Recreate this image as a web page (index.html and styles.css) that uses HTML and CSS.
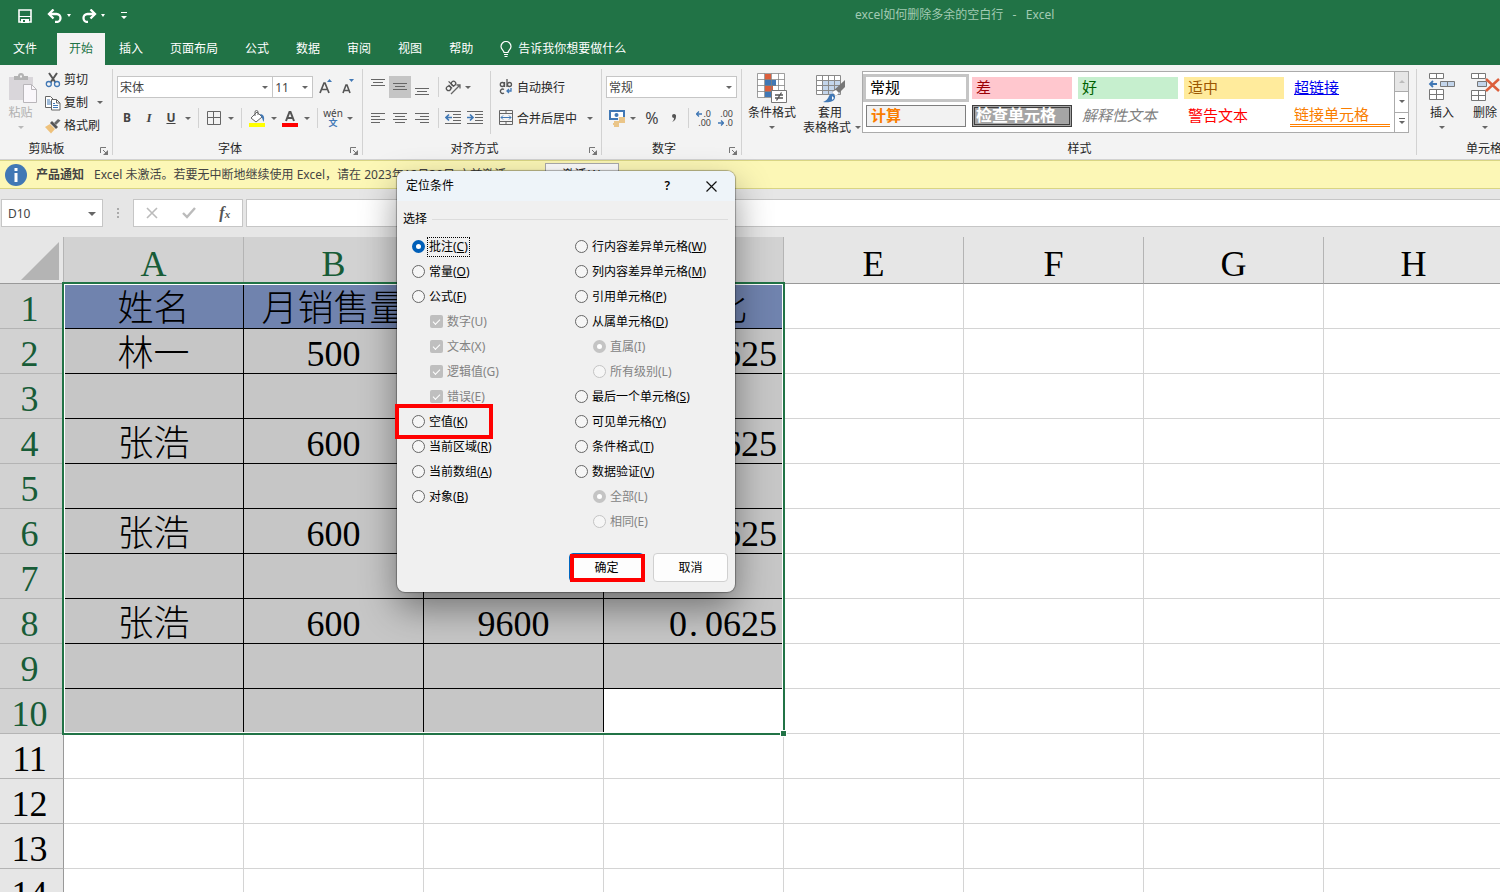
FILE: index.html
```html
<!DOCTYPE html>
<html lang="zh-CN">
<head>
<meta charset="utf-8">
<title>excel如何删除多余的空白行 - Excel</title>
<link rel="stylesheet" href="styles.css">
</head>
<body>
<div class="app">
  <header class="titlebar">
    <div class="quick">
      <button class="qbtn" aria-label="保存"><svg width="14" height="14" viewBox="0 0 14 14"><path d="M1 1h12v12H1z" fill="none" stroke="#fff" stroke-width="1.6"/><path d="M1 7h12v1H1zM3 10h8v4H3z" fill="#fff"/><path d="M5 11h2v2H5z" fill="#217346"/></svg></button>
      <button class="qbtn undo" aria-label="撤消"><svg width="16" height="14" viewBox="0 0 16 14"><path d="M2 5h7.500a4 4 0 0 1 0 8H8" fill="none" stroke="#fff" stroke-width="2.300"/><path d="M6.500.5L2 5l4.500 4.500" fill="none" stroke="#fff" stroke-width="2.300"/></svg></button>
      <span class="caret light"></span>
      <button class="qbtn redo" aria-label="恢复"><svg width="16" height="14" viewBox="0 0 16 14"><path d="M14 5H6.500a4 4 0 0 0 0 8H7" fill="none" stroke="#fff" stroke-width="2.300"/><path d="M9.500.5L14 5 9.500 9.500" fill="none" stroke="#fff" stroke-width="2.300"/></svg></button>
      <span class="caret light"></span>
      <button class="qbtn more" aria-label="自定义快速访问工具栏"><svg width="6" height="8" viewBox="0 0 6 8"><path d="M0 0h6v1H0zM0 4h6L3 7z" fill="#fff"/></svg></button>
    </div>
    <div class="doc-title">excel如何删除多余的空白行&nbsp; &nbsp;-&nbsp; &nbsp;Excel</div>
  </header>
  <nav class="tabs">
    <button class="tab file">文件</button>
    <button class="tab active">开始</button>
    <button class="tab">插入</button>
    <button class="tab">页面布局</button>
    <button class="tab">公式</button>
    <button class="tab">数据</button>
    <button class="tab">审阅</button>
    <button class="tab">视图</button>
    <button class="tab">帮助</button>
    <button class="tab tell"><svg width="12" height="17" viewBox="0 0 12 17"><path d="M4 11.500C4 9.500 1 8.500 1 5.500a5 5 0 0 1 10 0c0 3-3 4-3 6zM4 13.500h4M4.500 15.500h3" fill="none" stroke="#fff" stroke-width="1.200"/></svg>告诉我你想要做什么</button>
  </nav>

  <section class="ribbon">
    <div class="group clipboard">
      <div class="group-main">
        <button class="big disabled paste"><svg width="28" height="31" viewBox="0 0 28 31"><path d="M0 4h24v23H0z" fill="#d9d6da"/><path d="M5 7V3h4a3 3 0 0 1 6 0h4v4z" fill="#b3b3b3"/><path d="M11 2.500h2v2h-2z" fill="#f3f3f3"/><path d="M14.500 11.500h8l5 5v13h-13z" fill="#faf7fb" stroke="#b9b6ba"/><path d="M22.500 11.500v5h5" fill="none" stroke="#b9b6ba"/></svg><span>粘贴</span><i class="caret"></i></button>
        <div class="stack">
          <button class="small"><svg width="16" height="16" viewBox="0 0 16 16"><path d="M4 1l6.500 9.500M12 1L5.500 10.500" stroke="#555" stroke-width="2" fill="none"/><circle cx="3.800" cy="12" r="2.500" fill="none" stroke="#4178b5" stroke-width="1.300"/><circle cx="12" cy="12" r="2.500" fill="none" stroke="#4178b5" stroke-width="1.300"/></svg>剪切</button>
          <button class="small"><svg width="16" height="16" viewBox="0 0 16 16"><path d="M.5 1.500h5l3 3v8h-8z" fill="#fff" stroke="#666"/><path d="M2 5h3M2 7h4M2 9h4" stroke="#4178b5"/><path d="M6.500 4.500h5l3.500 3.500v7h-8.500z" fill="#fff" stroke="#666"/><path d="M11.500 4.500V8H15" fill="none" stroke="#666"/><path d="M8 8.500h2M8 10.500h5M8 12.500h5" stroke="#4178b5"/></svg>复制<i class="caret"></i></button>
          <button class="small"><svg width="16" height="16" viewBox="0 0 16 16"><path d="M0 9l5-3 5 5-4 4.500z" fill="#eec17b"/><path d="M5 5l2-2 6 6-2 2z" fill="#555"/><path d="M9 5l4-4 2.500 1.500L11 7z" fill="#6a6a6a"/></svg>格式刷</button>
        </div>
      </div>
      <div class="group-label">剪贴板</div>
      <button class="launch" aria-label="剪贴板设置"><svg width="8" height="8" viewBox="0 0 8 8"><path d="M.5 6V.5H6M3 3l4 4" fill="none" stroke="#777"/><path d="M8 3v5H3z" fill="#777"/></svg></button>
    </div>

    <div class="group font">
      <div class="line">
        <span class="combo name"><select aria-label="字体"><option>宋体</option></select><i class="caret"></i></span>
        <span class="combo size"><select aria-label="字号"><option>11</option></select><i class="caret"></i></span>
        <button class="tool grow" aria-label="增大字号"><svg width="14" height="16" viewBox="0 0 14 16"><path d="M1 14L5 4h1l4 10M2.500 10.500h6" fill="none" stroke="#555" stroke-width="1.700"/><path d="M8 3h5L10.500 0z" fill="#4178b5"/></svg></button>
        <button class="tool" aria-label="减小字号"><svg width="14" height="16" viewBox="0 0 14 16"><path d="M2 14l3-8h1l3 8M3 11.500h5" fill="none" stroke="#555" stroke-width="1.600"/><path d="M8 0h5l-2.500 3z" fill="#4178b5"/></svg></button>
      </div>
      <div class="line second">
        <button class="tool b">B</button><button class="tool i">I</button><button class="tool u">U</button><i class="caret"></i><i class="sep"></i>
        <button class="tool" aria-label="边框"><svg width="14" height="14" viewBox="0 0 14 14"><path d="M.5.5h13v13H.5zM6.500.5v13M.5 6.500h13" fill="none" stroke="#666"/></svg></button><i class="caret"></i><i class="sep"></i>
        <button class="tool" aria-label="填充颜色"><svg width="16" height="17" viewBox="0 0 16 17"><path d="M2 8l6-6 5 5-6 5z" fill="#fff" stroke="#666"/><path d="M6 6V2a1.500 1.500 0 0 1 3 0v3" fill="none" stroke="#666"/><path d="M11 4c4 0 5 4 3.500 8-1-2-1-4-2-5z" fill="#4178b5"/><path d="M0 13h16v4H0z" fill="#ff0"/></svg></button><i class="caret"></i>
        <button class="tool" aria-label="字体颜色"><svg width="16" height="17" viewBox="0 0 16 17"><path d="M4 11L7.500 2h1L12 11M5.500 8h5" fill="none" stroke="#555" stroke-width="2"/><path d="M0 13h16v4H0z" fill="#f00"/></svg></button><i class="caret"></i><i class="sep"></i>
        <button class="tool pinyin"><span>wén</span><b>文</b></button><i class="caret"></i>
      </div>
      <div class="group-label">字体</div>
      <button class="launch" aria-label="字体设置"><svg width="8" height="8" viewBox="0 0 8 8"><path d="M.5 6V.5H6M3 3l4 4" fill="none" stroke="#777"/><path d="M8 3v5H3z" fill="#777"/></svg></button>
    </div>

    <div class="group align">
      <div class="line">
        <button class="tool" aria-label="顶端对齐"><svg width="14" height="20" viewBox="0 0 14 20"><path d="M0 2.500h14M2 5.500h10M0 8.500h14" stroke="#666"/></svg></button>
        <button class="tool on" aria-label="垂直居中"><svg width="14" height="20" viewBox="0 0 14 20"><path d="M0 6.500h14M2 9.500h10M0 12.500h14" stroke="#666"/></svg></button>
        <button class="tool" aria-label="底端对齐"><svg width="14" height="20" viewBox="0 0 14 20"><path d="M0 11.500h14M2 14.500h10M0 17.500h14" stroke="#666"/></svg></button>
        <i class="sep"></i>
        <button class="tool orient" aria-label="方向"><svg width="17" height="16" viewBox="0 0 17 16"><g transform="rotate(-45 5 8)" fill="none" stroke="#555" stroke-width="1.300"><circle cx="3" cy="8" r="2.200"/><path d="M5.500 5.500v5M8 3v7.500"/><circle cx="10" cy="8" r="2.200"/></g><path d="M6 15l9-9M11.500 6H15v3.500" fill="none" stroke="#666" stroke-width="1.300"/></svg></button><i class="caret"></i>
        <i class="sep tall pushed"></i>
        <button class="word"><svg width="16" height="16" viewBox="0 0 16 16"><g fill="none" stroke="#555" stroke-width="1.300"><path d="M6.500 3v5"/><circle cx="4.300" cy="5.500" r="2"/><path d="M9 0v8"/><circle cx="11.500" cy="5.500" r="2"/><path d="M6 10.500a2.200 2.200 0 1 0 0 3.500"/></g><path d="M13 9v3H9M11 10l-2 2 2 2" fill="none" stroke="#4178b5" stroke-width="1.300"/></svg><span>自动换行</span></button>
      </div>
      <div class="line second">
        <button class="tool" aria-label="左对齐"><svg width="14" height="12" viewBox="0 0 14 12"><path d="M0 1.500h14M0 4.500h9M0 7.500h14M0 10.500h9" stroke="#666"/></svg></button>
        <button class="tool" aria-label="居中"><svg width="14" height="12" viewBox="0 0 14 12"><path d="M0 1.500h14M2 4.500h10M0 7.500h14M2 10.500h10" stroke="#666"/></svg></button>
        <button class="tool" aria-label="右对齐"><svg width="14" height="12" viewBox="0 0 14 12"><path d="M0 1.500h14M5 4.500h9M0 7.500h14M5 10.500h9" stroke="#666"/></svg></button>
        <i class="sep"></i>
        <button class="tool" aria-label="减少缩进"><svg width="16" height="14" viewBox="0 0 16 14"><path d="M0 .5h16M8 3.500h8M8 6.500h8M8 9.500h8M0 12.500h16" stroke="#666"/><path d="M7 6.500H1.500M4 3.500l-3 3 3 3" fill="none" stroke="#4178b5" stroke-width="1.700"/></svg></button>
        <button class="tool" aria-label="增加缩进"><svg width="16" height="14" viewBox="0 0 16 14"><path d="M0 .5h16M8 3.500h8M8 6.500h8M8 9.500h8M0 12.500h16" stroke="#666"/><path d="M0 6.500h5.500M3 3.500l3 3-3 3" fill="none" stroke="#4178b5" stroke-width="1.700"/></svg></button>
        <i class="sep tall"></i>
        <button class="word"><svg width="16" height="16" viewBox="0 0 16 16"><path d="M1.500.5h13v14h-13zM1.500 3.500h13M1.500 11.500h13M8 .5v3M8 11.500v3" fill="none" stroke="#666"/><path d="M3 7.500h10M5 5.500l-2 2 2 2M11 5.500l2 2-2 2" fill="none" stroke="#4178b5"/></svg><span>合并后居中</span><i class="caret"></i></button>
      </div>
      <div class="group-label">对齐方式</div>
      <button class="launch" aria-label="对齐设置"><svg width="8" height="8" viewBox="0 0 8 8"><path d="M.5 6V.5H6M3 3l4 4" fill="none" stroke="#777"/><path d="M8 3v5H3z" fill="#777"/></svg></button>
    </div>

    <div class="group number">
      <div class="line"><span class="combo format"><select aria-label="数字格式"><option>常规</option></select><i class="caret"></i></span></div>
      <div class="line second">
        <button class="tool" aria-label="会计数字格式"><svg width="17" height="17" viewBox="0 0 17 17"><path d="M1 1h14v8H1z" fill="#fff" stroke="#4178b5" stroke-width="2"/><circle cx="7.500" cy="5" r="2" fill="#4178b5"/><path d="M9 7h7v6H9zM4 11h6v6H4z" fill="#f3f3f3"/><path d="M10 8h6M10 10h6M10 12h6M5 12h5M4 14h6M5 16h5" stroke="#e8b765" stroke-width="1.500"/></svg></button><i class="caret"></i>
        <button class="tool percent">%</button>
        <button class="tool" aria-label="千位分隔样式"><svg width="6" height="8" viewBox="0 0 6 8"><path d="M3 0a2 2 0 0 1 2 2.500C5 5 4 7 1 8c1-1 2-2 2-4A2 2 0 0 1 3 0z" fill="#555"/></svg></button>
        <i class="sep"></i>
        <button class="tool decimals"><span><svg width="6" height="6" viewBox="0 0 6 6"><path d="M6 3H1M3 .5L.5 3 3 5.500" fill="none" stroke="#4178b5" stroke-width="1.300"/></svg>.0</span><span>.00</span></button>
        <button class="tool decimals"><span>.00</span><span><svg width="6" height="6" viewBox="0 0 6 6"><path d="M0 3h5M3 .5L5.500 3 3 5.500" fill="none" stroke="#4178b5" stroke-width="1.300"/></svg>.0</span></button>
      </div>
      <div class="group-label">数字</div>
      <button class="launch" aria-label="数字设置"><svg width="8" height="8" viewBox="0 0 8 8"><path d="M.5 6V.5H6M3 3l4 4" fill="none" stroke="#777"/><path d="M8 3v5H3z" fill="#777"/></svg></button>
    </div>

    <div class="group styles">
      <div class="group-main">
        <button class="big cond"><svg width="31" height="31" viewBox="0 0 31 31"><path d="M1 .5h26v24H1z" fill="#fff"/><path d="M8 1h6v6H8zM8 13h8v6H8z" fill="#dc5f3c"/><path d="M8 7h11v6H8zM8 19h6v5H8z" fill="#4178b5"/><path d="M.5.5h27v24H.5zM7.500.5v24M14.500.5v24M21.500.5v24M.5 6.500h27M.5 12.500h27M.5 18.500h27" fill="none" stroke="#808080" stroke-opacity=".75"/><path d="M14.500 17.500h15v12h-15z" fill="#fff" stroke="#777"/><path d="M18 22h8M18 25h8M24.500 19.500l-5 8" stroke="#555" stroke-width="1.300"/></svg><span>条件格式</span><i class="caret"></i></button>
        <button class="big tablefmt"><svg width="31" height="31" viewBox="0 0 31 31"><path d="M1.500 2.500h24v19h-24z" fill="#fff"/><path d="M8 8h17v14H8z" fill="#c3d5eb"/><path d="M1.500 2.500h24v19h-24zM7.500 2.500v19M13.500 2.500v19M19.500 2.500v19M1.500 7.500h24M1.500 12.500h24M1.500 17.500h24" fill="none" stroke="#8a8a8a"/><path d="M30 7v7l-9 9-4-4z" fill="#777"/><path d="M21 17l3 3-3 3-4-4z" fill="#fff"/><path d="M14 23c2-4 7-2 6 2-1 4-7 5-12 4 3-1 5-3 6-6z" fill="#4178b5"/><path d="M17 23l2 2-2 2z" fill="#fff"/></svg><span>套用</span><span class="withcaret">表格格式<i class="caret"></i></span></button>
        <div class="gallery">
          <div class="samples">
            <button class="st normal">常规</button><button class="st bad">差</button><button class="st good">好</button><button class="st neutral">适中</button><button class="st link">超链接</button>
            <button class="st calc">计算</button><button class="st check">检查单元格</button><button class="st explain">解释性文本</button><button class="st warn">警告文本</button><button class="st linked">链接单元格</button>
          </div>
          <div class="scroll"><button class="off" aria-label="上一行"><i class="caret up"></i></button><button aria-label="下一行"><i class="caret"></i></button><button aria-label="更多"><i class="caret bar"></i></button></div>
        </div>
      </div>
      <div class="group-label">样式</div>
    </div>

    <div class="group cells">
      <div class="group-main">
        <button class="big"><svg width="28" height="31" viewBox="0 0 28 31"><g fill="#fff" stroke="#777"><path d="M1.500.5h14v5h-14zM8.500.5v5M1.500 16.500h14v10h-14zM1.500 21.500h14M8.500 16.500v10"/><path d="M12.500 8.500h14v5h-14zM19.500 8.500v5" fill="#c3d5eb"/></g><path d="M9 11H3M5 8l-3 3 3 3" fill="none" stroke="#4178b5" stroke-width="1.800"/></svg><span>插入</span><i class="caret"></i></button>
        <button class="big"><svg width="30" height="31" viewBox="0 0 30 31"><g fill="#fff" stroke="#777"><path d="M1.500.5h14v5h-14zM8.500.5v5M1.500 17.500h14v10h-14zM1.500 22.500h14M8.500 17.500v10"/><path d="M7.500 8.500h9v5h-9z" fill="#c3d5eb"/></g><path d="M16 6l13 12M29 6L16 18" stroke="#dc5f3c" stroke-width="2.500"/></svg><span>删除</span><i class="caret"></i></button>
      </div>
      <div class="group-label">单元格</div>
    </div>
  </section>

  <section class="notice">
    <svg width="22" height="22" viewBox="0 0 22 22"><circle cx="11" cy="11" r="11" fill="#4178b5"/><path d="M9.500 4h3v3h-3zM9.500 9h3v9h-3z" fill="#fff"/></svg>
    <strong>产品通知</strong>
    <span>Excel 未激活。若要无中断地继续使用 Excel，请在 2023年12月30日 之前激活。</span>
    <button>激活(A)</button>
  </section>

  <section class="formula">
    <label class="namebox"><input value="D10" aria-label="名称框"><i class="caret"></i></label>
    <i class="dots"></i>
    <div class="fx">
      <button aria-label="取消"><svg width="12" height="12" viewBox="0 0 12 12"><path d="M1 1l10 10M11 1L1 11" stroke="#bbb" stroke-width="1.600"/></svg></button>
      <button aria-label="输入"><svg width="14" height="12" viewBox="0 0 14 12"><path d="M1 6l4 4 8-9" fill="none" stroke="#bbb" stroke-width="2.400"/></svg></button>
      <button class="fn"><span>f</span><small>x</small></button>
    </div>
    <input class="edit" aria-label="编辑栏">
  </section>

  <main class="sheet">
    <table class="grid">
      <colgroup><col class="rowcol"><col><col><col><col><col><col><col><col></colgroup>
      <thead><tr><th class="corner"><svg width="40" height="38" viewBox="0 0 40 38"><path d="M39 0v38H1z" fill="#b4b4b4"/></svg></th><th class="sel">A</th><th class="sel">B</th><th class="sel">C</th><th class="sel">D</th><th>E</th><th>F</th><th>G</th><th>H</th></tr></thead>
      <tbody class="picked">
        <tr class="head"><th>1</th><td>姓名</td><td>月销售量</td><td></td><td>销售比</td><td></td><td></td><td></td><td></td></tr>
        <tr><th>2</th><td>林一</td><td>500</td><td></td><td class="num">0<span class="pt">.</span>0625</td><td></td><td></td><td></td><td></td></tr>
        <tr><th>3</th><td></td><td></td><td></td><td></td><td></td><td></td><td></td><td></td></tr>
        <tr><th>4</th><td>张浩</td><td>600</td><td></td><td class="num">0<span class="pt">.</span>0625</td><td></td><td></td><td></td><td></td></tr>
        <tr><th>5</th><td></td><td></td><td></td><td></td><td></td><td></td><td></td><td></td></tr>
        <tr><th>6</th><td>张浩</td><td>600</td><td></td><td class="num">0<span class="pt">.</span>0625</td><td></td><td></td><td></td><td></td></tr>
        <tr><th>7</th><td></td><td></td><td></td><td></td><td></td><td></td><td></td><td></td></tr>
        <tr><th>8</th><td>张浩</td><td>600</td><td>9600</td><td class="num">0<span class="pt">.</span>0625</td><td></td><td></td><td></td><td></td></tr>
        <tr><th>9</th><td></td><td></td><td></td><td></td><td></td><td></td><td></td><td></td></tr>
        <tr><th>10</th><td></td><td></td><td></td><td class="current"></td><td></td><td></td><td></td><td></td></tr>
      </tbody>
      <tbody>
        <tr><th>11</th><td></td><td></td><td></td><td></td><td></td><td></td><td></td><td></td></tr>
        <tr><th>12</th><td></td><td></td><td></td><td></td><td></td><td></td><td></td><td></td></tr>
        <tr><th>13</th><td></td><td></td><td></td><td></td><td></td><td></td><td></td><td></td></tr>
        <tr><th>14</th><td></td><td></td><td></td><td></td><td></td><td></td><td></td><td></td></tr>
      </tbody>
    </table>
    <div class="selection"><i class="handle"></i></div>
  </main>

  <div class="dialog" role="dialog" aria-labelledby="dlg">
    <div class="dlg-title"><span id="dlg">定位条件</span><button class="help">?</button><button class="close" aria-label="关闭"><svg width="11" height="11" viewBox="0 0 11 11"><path d="M.5.5l10 10M10.500.5l-10 10" stroke="#111" stroke-width="1.200"/></svg></button></div>
    <form class="dlg-body">
      <div class="legend">选择</div>
      <div class="options">
        <div class="col">
          <label><input type="radio" name="go" checked><span class="focus">批注(<u>C</u>)</span></label>
          <label><input type="radio" name="go"><span>常量(<u>O</u>)</span></label>
          <label><input type="radio" name="go"><span>公式(<u>F</u>)</span></label>
          <label class="sub"><input type="checkbox" checked disabled><span>数字(U)</span></label>
          <label class="sub"><input type="checkbox" checked disabled><span>文本(X)</span></label>
          <label class="sub"><input type="checkbox" checked disabled><span>逻辑值(G)</span></label>
          <label class="sub"><input type="checkbox" checked disabled><span>错误(E)</span></label>
          <label class="marked"><input type="radio" name="go"><span>空值(<u>K</u>)</span></label>
          <label><input type="radio" name="go"><span>当前区域(<u>R</u>)</span></label>
          <label><input type="radio" name="go"><span>当前数组(<u>A</u>)</span></label>
          <label><input type="radio" name="go"><span>对象(<u>B</u>)</span></label>
        </div>
        <div class="col">
          <label><input type="radio" name="go"><span>行内容差异单元格(<u>W</u>)</span></label>
          <label><input type="radio" name="go"><span>列内容差异单元格(<u>M</u>)</span></label>
          <label><input type="radio" name="go"><span>引用单元格(<u>P</u>)</span></label>
          <label><input type="radio" name="go"><span>从属单元格(<u>D</u>)</span></label>
          <label class="sub"><input type="radio" name="level" checked disabled><span>直属(I)</span></label>
          <label class="sub"><input type="radio" name="level" disabled><span>所有级别(L)</span></label>
          <label><input type="radio" name="go"><span>最后一个单元格(<u>S</u>)</span></label>
          <label><input type="radio" name="go"><span>可见单元格(<u>Y</u>)</span></label>
          <label><input type="radio" name="go"><span>条件格式(<u>T</u>)</span></label>
          <label><input type="radio" name="go"><span>数据验证(<u>V</u>)</span></label>
          <label class="sub"><input type="radio" name="valid" checked disabled><span>全部(L)</span></label>
          <label class="sub"><input type="radio" name="valid" disabled><span>相同(E)</span></label>
        </div>
      </div>
      <div class="actions"><button type="button" class="ok">确定</button><button type="button">取消</button></div>
    </form>
  </div>
</div>
</body>
</html>
```

FILE: styles.css
```css
*, *::before, *::after { box-sizing: border-box; }
body { margin: 0; }
body, button, input, select { font-family: "Noto Sans", "Noto Sans CJK SC", sans-serif; font-size: 12px; line-height: 16px; color: #262626; }
button { border: 0; padding: 0; background: none; white-space: nowrap; }
input, select { border: 0; margin: 0; padding: 0; background: none; outline: 0; }
svg { display: block; flex: none; }
.app { position: relative; display: flex; flex-direction: column; height: 100vh; overflow: hidden; background: #fff; }

.caret { flex: none; width: 0; height: 0; border: 3px solid transparent; border-top-color: #666; border-bottom: 0; }
.caret.light { border-width: 2px; border-top-width: 3px; border-top-color: #fff; border-bottom: 0; margin: 0 10px 0 4px; }

/* title bar and tabs */
.titlebar { display: flex; align-items: center; height: 33px; flex: none; background: #217346; }
.quick { display: flex; align-items: center; width: 855px; padding: 0 0 2px 18px; }
.undo { margin-left: 15px; }
.more { margin-left: 6px; }
.doc-title { color: #a3cbb4; white-space: nowrap; padding-bottom: 4px; }
.tabs { display: flex; gap: 1px; height: 32px; flex: none; background: #217346; }
.tab { padding: 0 13px 1px; color: #fff; }
.tab.file { margin-right: 6px; }
.tab.active { padding: 0 12px 1px; background: #f3f3f3; color: #217346; }
.tab.tell { display: flex; align-items: center; gap: 6px; padding-bottom: 0; }

/* ribbon */
.ribbon { display: flex; height: 95px; flex: none; background: #f3f3f3; border-bottom: 1px solid #d2d2d2; }
.group { position: relative; display: flex; flex-direction: column; flex: none; padding: 6px 4px 2px; }
.group::after { content: ""; position: absolute; right: 0; top: 4px; bottom: 4px; width: 1px; background: #d2d2d2; }
.group-main { display: flex; }
.group-label { margin-top: auto; padding-right: 16px; text-align: center; }
.launch { position: absolute; right: 5px; bottom: 4px; }
.clipboard { width: 113px; }
.font { width: 250px; }
.align { width: 239px; }
.number { width: 140px; }
.styles { width: 675px; }
.cells { width: 134px; }
.cells .group-label, .styles .group-label { padding-right: 0; }
.clipboard .group-label { padding-right: 20px; }

.big { display: flex; flex-direction: column; align-items: center; padding-top: 2px; }
.big .caret { margin-top: 6px; }
.big span { line-height: 15px; }
.big svg { margin-bottom: 1px; }
.paste { width: 34px; color: #b1b1b1; padding-left: 3px; }
.paste span { margin-right: 4px; }
.paste .caret { border-top-color: #b9b9b9; margin-right: 3px; }
.stack { display: flex; flex-direction: column; margin: -3px 0 0 7px; height: 69px; }
.small { display: flex; align-items: center; gap: 3px; height: 23px; }
.small .caret { margin-left: 6px; }

.line { display: flex; align-items: center; height: 32px; }
.line.second { height: 30px; }
.tool { display: flex; align-items: center; justify-content: center; width: 22px; height: 22px; flex: none; }
.tool.on { background: #c5c5c5; }
.sep { width: 1px; height: 20px; background: #d2d2d2; margin: 0 3px; flex: none; }
.combo { position: relative; display: flex; align-items: center; height: 22px; border: 1px solid #c6c6c6; background: #fff; }
.combo select { appearance: none; width: 100%; height: 20px; padding: 1px 0 0 2px; color: #444; }
.combo .caret { position: absolute; right: 4px; }
.combo.name { width: 157px; }
.combo.size { width: 40px; }
.combo.format { width: 131px; }
.combo + .combo { border-left: 0; }
.grow { margin-left: 2px; }
.font .line.second { margin-left: -1px; }
.font .caret { margin: 0 2px 0 3px; }
.font .combo .caret { margin: 0; }
.font .second .sep { margin: 0 4px 0 5px; }
.b { font-weight: 700; color: #444; }
.i { font: italic 700 13px "Liberation Serif", serif; color: #444; }
.u { font-weight: 700; text-decoration: underline; color: #444; }
.pinyin { flex-direction: column; font-size: 10px; line-height: 9px; color: #444; }
.pinyin b { font-size: 9px; line-height: 9px; color: #4178b5; }
.sep.tall { height: 32px; margin: 0 7px 0 4px; }
.pushed.tall { margin-left: 19px; }
.align .sep:not(.tall) { margin: 0 3px 0 5px; }
.orient + .caret { margin-left: 1px; }
.word { display: flex; align-items: center; gap: 3px; }
.word span { padding-top: 1px; }
.word .caret { margin-left: 7px; }
.percent { font-size: 16px; color: #444; margin-left: 5px; }
.number .second .caret { margin-left: 2px; }
.decimals { flex-direction: column; align-items: flex-end; padding-right: 3px; font-size: 9px; line-height: 9px; color: #444; }
.decimals span { display: flex; align-items: center; gap: 1px; }

.cond { width: 52px; }
.tablefmt { width: 64px; }
.tablefmt .withcaret { display: flex; align-items: center; gap: 4px; margin-left: 4px; }
.tablefmt .withcaret .caret { margin-top: 0; }
.gallery { display: flex; height: 62px; border: 1px solid #ababab; background: #fff; }
.samples { display: grid; grid-template-columns: repeat(5, 100px); gap: 6px; padding: 5px 3px 4px; align-content: start; }
.st { height: 22px; padding: 0 4px 3px; font-size: 15px; text-align: left; color: #000; line-height: 18px; }
.normal { outline: 3px solid #c5c5c5; }
.bad { background: #ffc7ce; color: #9c0006; }
.good { background: #c6efce; color: #006100; }
.neutral { background: #ffeb9c; color: #9c5700; }
.link { color: #0000ee; text-decoration: underline; }
.calc { background: #f2f2f2; border: 1px solid #7f7f7f; color: #fa7d00; font-weight: 700; }
.check { background: #a5a5a5; border: 3px double #3f3f3f; color: #fff; font-weight: 700; font-size: 16px; padding: 0 1px 3px; line-height: 14px; }
.explain { color: #7f7f7f; font-style: italic; }
.warn { color: #f00; }
.linked { color: #fa7d00; border-bottom: 3px double #ff8001; }
.scroll { display: flex; flex-direction: column; width: 14px; margin-left: 1px; border-left: 1px solid #ababab; }
.scroll button { display: flex; flex: 1; align-items: center; justify-content: center; }
.scroll button + button { border-top: 1px solid #ababab; }
.scroll .off { background: #e6e6e6; }
.caret.up { transform: rotate(180deg); border-top-color: #bbb; }
.caret.bar { position: relative; }
.caret.bar::before { content: ""; position: absolute; left: -3px; top: -6px; width: 6px; height: 1px; background: #666; }
.cells .group-main { gap: 14px; padding-left: 7px; }

/* notice */
.notice { display: flex; align-items: center; height: 29px; flex: none; padding-left: 5px; background: #fcf7b6; border: solid #d9d583; border-width: 1px 0; white-space: nowrap; }
.notice strong { margin: 0 10px 0 9px; color: #444; }
.notice span { width: 419px; margin-right: 32px; color: #444; }
.notice button { width: 74px; height: 23px; border: 1px solid #ababab; background: #fdfdfd; }

/* formula bar */
.formula { display: flex; height: 48px; flex: none; align-items: flex-start; padding: 10px 0 0 1px; background: #e6e6e6; }
.namebox, .fx, .edit { height: 28px; border: 1px solid #c6c6c6; background: #fff; }
.namebox { display: flex; align-items: center; width: 102px; padding: 1px 6px 0; }
.namebox input { flex: 1; min-width: 0; color: #444; }
.namebox .caret { border-width: 4px; border-bottom: 0; }
.dots { width: 2px; height: 10px; margin: 9px 14px 0; background: repeating-linear-gradient(#aaa 0 2px, transparent 2px 4px); }
.fx { display: flex; align-items: center; justify-content: space-around; width: 110px; margin-right: 3px; }
.fn { font: italic 700 16px "Liberation Serif", serif; color: #555; }
.fn small { font-size: 11px; }
.edit { flex: 1; min-width: 0; border-right: 0; }

/* sheet */
.sheet { position: relative; flex: 1; min-height: 0; overflow: hidden; }
.grid { table-layout: fixed; width: 1504px; border-spacing: 0; font-family: "Liberation Serif", "Noto Sans CJK SC", serif; font-size: 36px; line-height: 38px; color: #000; }
.rowcol { width: 64px; }
.grid th, .grid td { height: 45px; padding: 6px 0 0; border: solid #d4d4d4; border-width: 0 1px 1px 0; text-align: center; font-weight: 300; white-space: nowrap; }
.grid th { font-weight: 400; background: #e6e6e6; border-right-color: #999; border-bottom-color: #b4b4b4; padding-right: 4px; }
.grid thead th { height: 47px; padding: 8px 0 0; border-right-color: #b4b4b4; border-bottom-color: #999; }
.grid thead .sel, .picked th { background: #d2d2d2; color: #185c37; }
.grid thead .corner { padding: 3px 3px 2px 20px; }
.picked td:nth-child(-n+5) { background: #c6c6c6; border-color: #000; }
.picked .head td:nth-child(-n+5) { background: #7083ae; }
.picked td.current { background: #fff; }
.grid .num { text-align: right; padding-right: 6px; }
.pt { display: inline-block; width: 18px; padding-left: 2px; text-align: left; }
.selection { position: absolute; left: 62px; top: 45px; width: 723px; height: 453px; border: 2px solid #217346; box-shadow: inset 0 0 0 1px #fff; }
.handle { position: absolute; right: -4px; bottom: -4px; width: 7px; height: 7px; border: 1px solid #fff; background: #217346; }

/* dialog */
.dialog { position: absolute; left: 397px; top: 171px; width: 338px; border-radius: 8px; background: #f0f0f0; color: #000; box-shadow: 0 0 1px 1px rgba(0,0,0,.3), 0 16px 36px rgba(0,0,0,.42); }
.dlg-title { display: flex; align-items: center; height: 30px; padding: 0 18px 0 9px; border-radius: 8px 8px 0 0; background: #eef4f9; }
.help { margin-left: auto; margin-right: 36px; font-weight: 600; color: #000; }
.dlg-body { padding: 10px 7px 10px 6px; }
.legend { display: flex; align-items: center; gap: 5px; height: 16px; }
.legend::after { content: ""; flex: 1; height: 1px; background: #dcdcdc; }
.options { display: grid; grid-template-columns: 163px 1fr; padding: 7px 0 0 9px; }
.col label { display: flex; align-items: center; gap: 4px; height: 25px; white-space: nowrap; position: relative; }
.col .sub { padding-left: 18px; color: #838383; }
.col input { appearance: none; flex: none; width: 13px; height: 13px; border: 1px solid #666; border-radius: 50%; background: #f6f6f6; }
.col input[type=radio]:checked { border: 4px solid #005fb8; background: #fff; }
.col input[type=radio]:disabled { border-color: #c4c4c4; }
.col input[type=checkbox] { position: relative; border: 0; border-radius: 2px; background: #bfbfbf; }
.col input[type=checkbox]::after { content: ""; position: absolute; left: 3px; top: 4px; width: 7px; height: 4px; border: solid #fff; border-width: 0 0 1px 1px; transform: rotate(-45deg); }
.focus { outline: 1px dotted #000; outline-offset: 1px; }
.marked::before { content: ""; position: absolute; left: -17px; top: -5px; width: 98px; height: 35px; border: 4px solid #f00; }
.actions { display: flex; justify-content: flex-end; gap: 9px; padding-top: 19px; }
.actions button { width: 75px; height: 29px; border: 1px solid #d0d0d0; border-radius: 4px; background: #fdfdfd; color: #000; }
.actions .ok { position: relative; border-color: #0067c0; }
.ok::after { content: ""; position: absolute; left: 0; top: 0; width: 75px; height: 28px; border: 4px solid #f00; }
```
